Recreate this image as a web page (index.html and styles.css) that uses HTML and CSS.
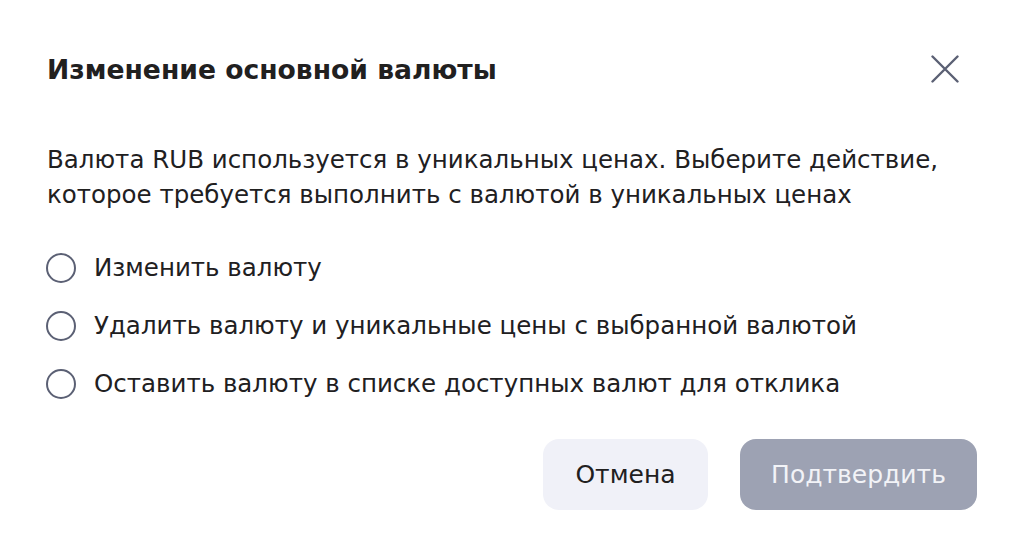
FILE: index.html
```html
<!DOCTYPE html>
<html lang="ru">
<head>
<meta charset="utf-8">
<link rel="stylesheet" href="styles.css">
</head>
<body>
<div class="dialog">
  <div class="header">
    <h1 class="title">Изменение основной валюты</h1>
    <button class="close" aria-label="Закрыть">
      <svg width="28" height="28" viewBox="0 0 28 28"><path d="M1.5 1.5L26.5 26.5M26.5 1.5L1.5 26.5" stroke="#5b6074" stroke-width="2.4" stroke-linecap="round"/></svg>
    </button>
  </div>
  <p class="text">Валюта RUB используется в уникальных ценах. Выберите действие, которое требуется выполнить с валютой в уникальных ценах</p>
  <div class="options">
    <label class="option"><span class="radio"></span><span>Изменить валюту</span></label>
    <label class="option"><span class="radio"></span><span>Удалить валюту и уникальные цены с выбранной валютой</span></label>
    <label class="option"><span class="radio"></span><span>Оставить валюту в списке доступных валют для отклика</span></label>
  </div>
  <div class="actions">
    <button class="btn btn-cancel">Отмена</button>
    <button class="btn btn-confirm">Подтвердить</button>
  </div>
</div>
</body>
</html>
```

FILE: styles.css
```css
html, body {
  margin: 0;
  padding: 0;
  background: #ffffff;
}
body {
  font-family: "DejaVu Sans", "Noto Sans", sans-serif;
  color: #21201f;
}
.dialog {
  width: 1018px;
  box-sizing: border-box;
  padding: 50px 41px 0 47px;
}
.header {
  display: flex;
  align-items: center;
  justify-content: space-between;
}
.title {
  margin: 0;
  font-size: 26.6px;
  line-height: 40px;
  font-weight: 700;
}
.close {
  border: 0;
  background: none;
  padding: 0;
  width: 28px;
  height: 28px;
  margin-right: 18px;
  margin-top: -2px;
  display: flex;
}
.text {
  margin: 52px 0 0;
  font-size: 24.5px;
  line-height: 35px;
}
.options {
  display: flex;
  flex-direction: column;
  gap: 22px;
  margin-top: 38px;
}
.option {
  display: flex;
  align-items: center;
  gap: 18px;
  font-size: 24.5px;
  line-height: 36px;
}
.radio {
  width: 30px;
  height: 30px;
  box-sizing: border-box;
  border: 2px solid #5b6074;
  border-radius: 50%;
  flex: none;
  margin-left: -1px;
}
.actions {
  display: flex;
  justify-content: flex-end;
  gap: 32px;
  margin-top: 37px;
}
.btn {
  height: 71px;
  border: 0;
  border-radius: 16px;
  font-family: inherit;
  font-size: 25px;
  padding: 0;
}
.btn-cancel {
  background: #f0f1f8;
  color: #21201f;
  width: 165px;
}
.btn-confirm {
  background: #9da2b3;
  color: #f2f3f7;
  width: 237px;
}
```
